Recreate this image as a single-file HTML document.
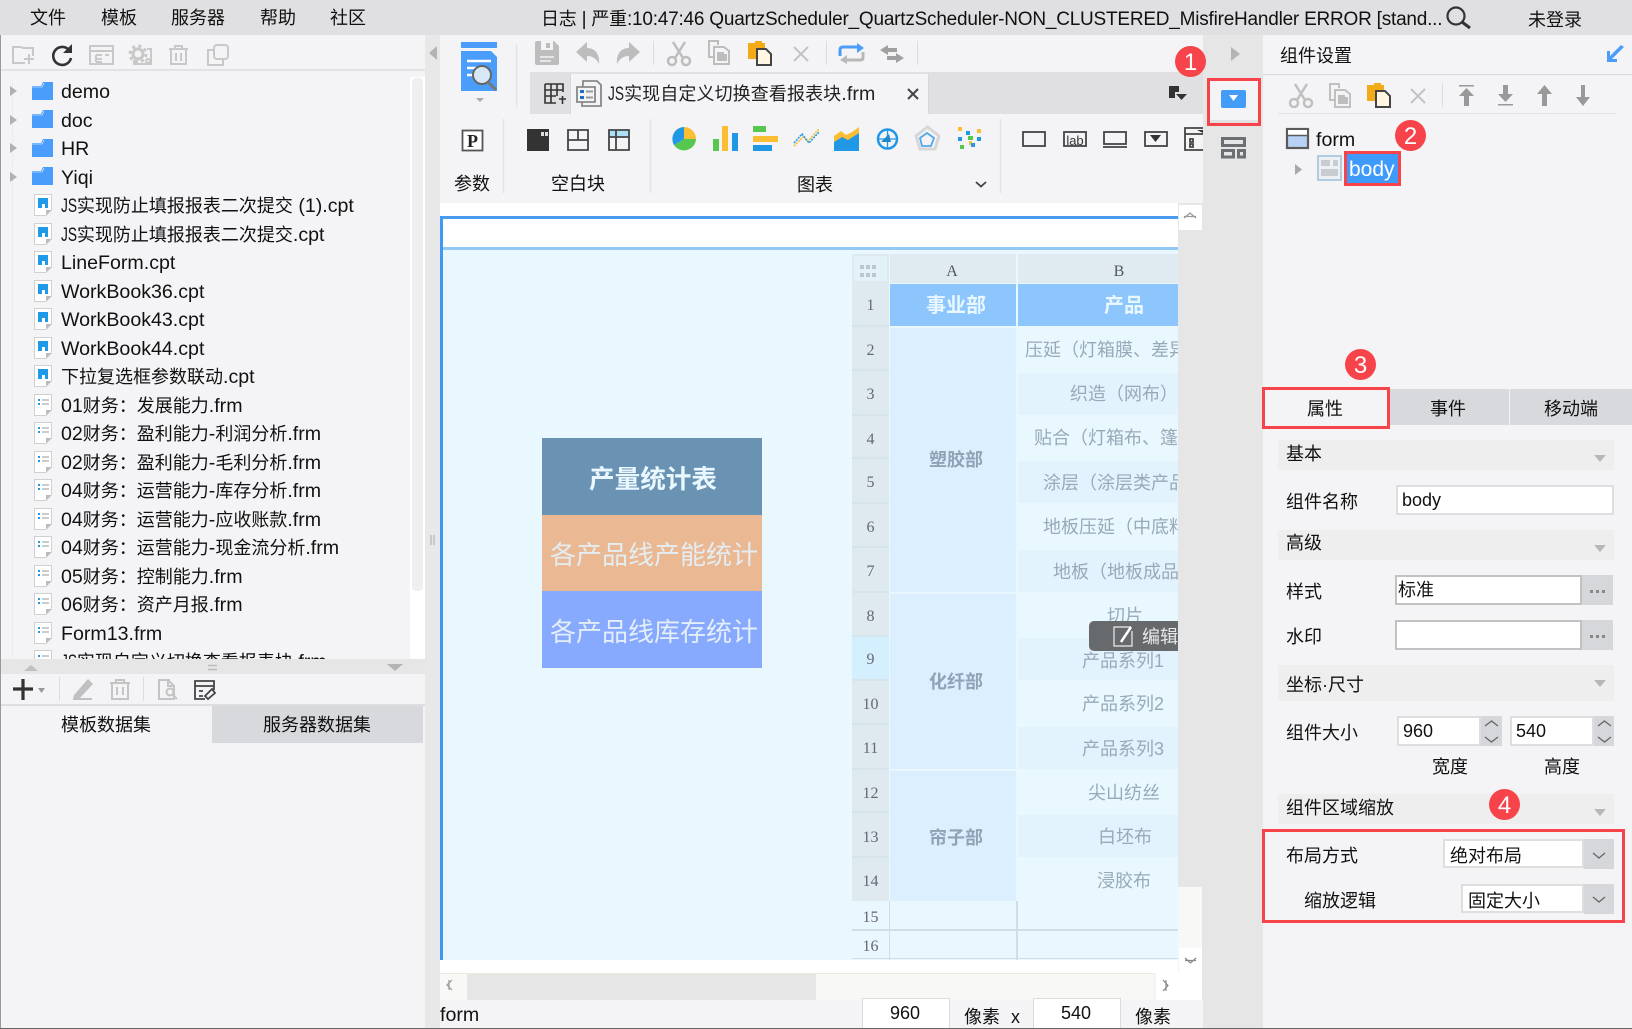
<!DOCTYPE html>
<html lang="zh"><head><meta charset="utf-8"><title>FineReport</title>
<style>
html,body{margin:0;padding:0;width:1632px;height:1029px;overflow:hidden;background:#f4f4f6}
body{position:relative;font-family:"Liberation Sans","Noto Sans CJK SC",sans-serif;color:#111;font-size:18px}
.b{position:absolute;box-sizing:border-box}
.t{position:absolute;white-space:nowrap;height:24px;line-height:24px;margin-top:1px}
.f{font-size:19.6px}
.f span{font-size:18px}
.f span.js,.js{display:inline-block;font-size:19.6px;transform:scaleX(.7);transform-origin:0 0;margin-right:-7px}
.g{color:#99a9b8;font-size:18px}
.gb{color:#8fa3b7;font-size:18px;font-weight:700;width:126px;left:893px;text-align:center}
.n{font-family:"Liberation Serif",serif;font-size:16px;color:#667;left:852px;width:37px;text-align:center}
.rh{position:absolute;left:852px;width:37px;background:#dfeaf0;border-bottom:2px solid #d6e4ec;box-sizing:border-box}
.alt{position:absolute;left:1018px;width:160px;background:#e3f3fd}
.sec{position:absolute;left:1278px;width:336px;background:#eeeeef}
.red{position:absolute;box-sizing:border-box;border:3px solid #f6444a}
.dot{position:absolute;width:31px;height:31px;border-radius:50%;background:#f6444a;color:#fff;font-size:24px;line-height:33px;text-align:center}
.inp{position:absolute;box-sizing:border-box;background:#fff;border:2px solid #dedede}
.inp2{position:absolute;box-sizing:border-box;background:#fff;border:2px solid #c2c2c2}
.btn{position:absolute;background:#d6d7db}
svg{position:absolute;left:0;top:0}
</style></head><body>

<!-- menu bar -->
<div class="b" style="left:0;top:0;width:1632px;height:35px;background:#e0e0e2"></div>
<div class="t" style="left:30px;top:5px">文件</div>
<div class="t" style="left:101px;top:5px">模板</div>
<div class="t" style="left:171px;top:5px">服务器</div>
<div class="t" style="left:260px;top:5px">帮助</div>
<div class="t" style="left:330px;top:5px">社区</div>
<div class="t" style="left:541px;top:6px;font-size:19px;letter-spacing:-.22px"><span style="font-size:18px">日志</span> | <span style="font-size:18px">严重</span>:10:47:46 QuartzScheduler_QuartzScheduler-NON_CLUSTERED_MisfireHandler ERROR [stand...</div>
<div class="t" style="left:1528px;top:7px">未登录</div>

<!-- left panel -->
<div class="b" style="left:0;top:35px;width:1px;height:994px;background:#999"></div>
<div class="b" style="left:1px;top:69px;width:424px;height:2px;background:#e2e2e4"></div>
<div class="b" style="left:410px;top:77px;width:15px;height:582px;background:#fff"></div>
<div class="b" style="left:412px;top:78px;width:11px;height:513px;background:#efeff1;border-radius:4px"></div>
<div class="b" style="left:425px;top:35px;width:15px;height:994px;background:#e8e8e8"></div>
<div class="b" style="left:12px;top:78px;width:1px;height:580px;background:#ececee"></div>

<div class="t f" style="left:61px;top:79px">demo</div>
<div class="t f" style="left:61px;top:108px">doc</div>
<div class="t f" style="left:61px;top:136px">HR</div>
<div class="t f" style="left:61px;top:165px">Yiqi</div>
<div class="t f" style="left:61px;top:193px"><span class="js">JS</span><span>实现防止填报报表二次提交</span> (1).cpt</div>
<div class="t f" style="left:61px;top:222px"><span class="js">JS</span><span>实现防止填报报表二次提交</span>.cpt</div>
<div class="t f" style="left:61px;top:250px">LineForm.cpt</div>
<div class="t f" style="left:61px;top:279px">WorkBook36.cpt</div>
<div class="t f" style="left:61px;top:307px">WorkBook43.cpt</div>
<div class="t f" style="left:61px;top:336px">WorkBook44.cpt</div>
<div class="t f" style="left:61px;top:364px"><span>下拉复选框参数联动</span>.cpt</div>
<div class="t f" style="left:61px;top:393px">01<span>财务：发展能力</span>.frm</div>
<div class="t f" style="left:61px;top:421px">02<span>财务：盈利能力</span>-<span>利润分析</span>.frm</div>
<div class="t f" style="left:61px;top:450px">02<span>财务：盈利能力</span>-<span>毛利分析</span>.frm</div>
<div class="t f" style="left:61px;top:478px">04<span>财务：运营能力</span>-<span>库存分析</span>.frm</div>
<div class="t f" style="left:61px;top:507px">04<span>财务：运营能力</span>-<span>应收账款</span>.frm</div>
<div class="t f" style="left:61px;top:535px">04<span>财务：运营能力</span>-<span>现金流分析</span>.frm</div>
<div class="t f" style="left:61px;top:564px">05<span>财务：控制能力</span>.frm</div>
<div class="t f" style="left:61px;top:592px">06<span>财务：资产月报</span>.frm</div>
<div class="t f" style="left:61px;top:621px">Form13.frm</div>
<div class="t f" style="left:61px;top:649px"><span class="js">JS</span><span>实现自定义切换查看报表块</span>.frm</div>

<svg width="1632" height="1029" viewBox="0 0 1632 1029">
<defs>
<symbol id="fd" overflow="visible"><path d="M0 4H9L11 0H21V18H0Z" fill="#4a9dfb"/><path d="M0 5H10L12 1" fill="none" stroke="#fff" stroke-width=".6"/></symbol>
<symbol id="cp" overflow="visible"><path d="M.5.5H17.5V16L12 21.5H.5Z" fill="#fff" stroke="#d0d0d0"/><path d="M12 21V16H17.5Z" fill="#bbb"/><path d="M4 4H14V14H11V10H8V14H4Z" fill="#1f9ae8"/></symbol>
<symbol id="fr" overflow="visible"><path d="M.5.5H17.5V16L12 21.5H.5Z" fill="#fff" stroke="#d0d0d0"/><path d="M12 21V16H17.5Z" fill="#bbb"/><path d="M4 5h2v2H4zM4 9h2v2H4z" fill="#1f9ae8"/><path d="M8 6h7M8 10h7" stroke="#999" fill="none"/></symbol>
<symbol id="ar" overflow="visible"><path d="M0 0L7 5L0 10Z" fill="#b0b0b0"/></symbol>
</defs>
<use href="#ar" x="10" y="86"/><use href="#ar" x="10" y="115"/><use href="#ar" x="10" y="143"/><use href="#ar" x="10" y="172"/>
<use href="#fd" x="32" y="82"/><use href="#fd" x="32" y="110"/><use href="#fd" x="32" y="139"/><use href="#fd" x="32" y="167"/>
<use href="#cp" x="34" y="194"/><use href="#cp" x="34" y="223"/><use href="#cp" x="34" y="251"/><use href="#cp" x="34" y="280"/><use href="#cp" x="34" y="308"/><use href="#cp" x="34" y="337"/><use href="#cp" x="34" y="365"/>
<use href="#fr" x="34" y="394"/><use href="#fr" x="34" y="422"/><use href="#fr" x="34" y="451"/><use href="#fr" x="34" y="479"/><use href="#fr" x="34" y="508"/><use href="#fr" x="34" y="536"/><use href="#fr" x="34" y="565"/><use href="#fr" x="34" y="593"/><use href="#fr" x="34" y="622"/><use href="#fr" x="34" y="650"/>
</svg>

<!-- left lower -->
<div class="b" style="left:1px;top:659px;width:424px;height:15px;background:#e6e6e6"></div>
<div class="b" style="left:1px;top:674px;width:424px;height:355px;background:#f4f4f6"></div>
<div class="b" style="left:1px;top:704px;width:424px;height:2px;background:#dedee0"></div>
<div class="b" style="left:212px;top:706px;width:211px;height:37px;background:#d8d9dd"></div>
<div class="t" style="left:61px;top:712px">模板数据集</div>
<div class="t" style="left:263px;top:712px">服务器数据集</div>

<!-- center toolbar -->
<div class="b" style="left:440px;top:35px;width:763px;height:168px;background:#f4f4f6"></div>
<div class="b" style="left:530px;top:72px;width:673px;height:42px;background:#e0e0e2"></div>
<div class="b" style="left:570px;top:74px;width:359px;height:40px;background:#f4f4f6;border-left:1px solid #d8d8da;border-right:1px solid #d8d8da"></div>
<div class="t f" style="left:608px;top:81px;color:#222;letter-spacing:.1px"><span class="js">JS</span><span>实现自定义切换查看报表块</span>.frm</div>
<div class="t" style="left:454px;top:171px">参数</div>
<div class="t" style="left:551px;top:171px">空白块</div>
<div class="t" style="left:797px;top:172px">图表</div>

<!-- canvas -->
<div class="b" style="left:440px;top:203px;width:738px;height:770px;background:#fff"></div>
<div class="b" style="left:440px;top:216px;width:738px;height:3px;background:#4a9cf0"></div>
<div class="b" style="left:440px;top:216px;width:3px;height:744px;background:#4097f5"></div>
<div class="b" style="left:443px;top:247px;width:735px;height:3px;background:#93c8f6"></div>
<div class="b" style="left:443px;top:250px;width:735px;height:710px;background:#e9f7ff"></div>

<!-- left blocks -->
<div class="b" style="left:542px;top:438px;width:220px;height:77px;background:#6a92b3"></div>
<div class="b" style="left:542px;top:515px;width:220px;height:76px;background:#eab893"></div>
<div class="b" style="left:542px;top:591px;width:220px;height:77px;background:#87aaff"></div>
<div class="t" style="left:589px;top:467px;font-size:25.6px;font-weight:700;color:#e9f7ff">产量统计表</div>
<div class="t" style="left:550px;top:542px;font-size:26px;color:#e4eef2">各产品线产能统计</div>
<div class="t" style="left:550px;top:619px;font-size:26px;color:#e4eef8">各产品线库存统计</div>

<!-- table -->
<div style="position:absolute;left:0;top:0;width:1178px;height:960px;overflow:hidden">
<div class="b" style="left:852px;top:254px;width:37px;height:29px;background:#e3f1f8;border:2px solid #dfeaf0"></div>
<div class="b" style="left:890px;top:254px;width:126px;height:29px;background:#dfebf1"></div>
<div class="b" style="left:1018px;top:254px;width:160px;height:29px;background:#dfebf1"></div>
<div class="b" style="left:890px;top:284px;width:126px;height:42px;background:#8dc5fd"></div>
<div class="b" style="left:1018px;top:284px;width:160px;height:42px;background:#8dc5fd"></div>
<div class="b" style="left:890px;top:328px;width:126px;height:264px;background:#dcefff"></div>
<div class="b" style="left:890px;top:594px;width:126px;height:175px;background:#dcefff"></div>
<div class="b" style="left:890px;top:771px;width:126px;height:130px;background:#dcefff"></div>
<div class="rh" style="top:283px;height:44px"></div><div class="rh" style="top:327px;height:44px"></div><div class="rh" style="top:371px;height:45px"></div><div class="rh" style="top:416px;height:43px"></div><div class="rh" style="top:459px;height:45px"></div><div class="rh" style="top:504px;height:44px"></div><div class="rh" style="top:548px;height:45px"></div><div class="rh" style="top:593px;height:44px"></div><div class="rh" style="top:637px;height:44px;background:#d4f0ff"></div><div class="rh" style="top:681px;height:44px"></div><div class="rh" style="top:725px;height:45px"></div><div class="rh" style="top:770px;height:43px"></div><div class="rh" style="top:813px;height:45px"></div><div class="rh" style="top:858px;height:43px;border:0"></div>
<div class="alt" style="top:373px;height:42px"></div><div class="alt" style="top:461px;height:42px"></div><div class="alt" style="top:550px;height:42px"></div><div class="alt" style="top:638px;height:42px"></div><div class="alt" style="top:727px;height:42px"></div><div class="alt" style="top:815px;height:42px"></div>
<div class="b" style="left:889px;top:901px;width:1px;height:59px;background:#cfdde5"></div>
<div class="b" style="left:1016px;top:901px;width:2px;height:59px;background:#cfdde5"></div>
<div class="b" style="left:852px;top:929px;width:326px;height:2px;background:#cfdde5"></div>
<div class="b" style="left:852px;top:958px;width:326px;height:1px;background:#cfdde5"></div>

<div class="t" style="left:889px;top:259px;width:126px;text-align:center;font-family:'Liberation Serif',serif;font-size:16px;color:#556">A</div>
<div class="t" style="left:1018px;top:259px;width:202px;text-align:center;font-family:'Liberation Serif',serif;font-size:16px;color:#556">B</div>
<div class="t" style="left:926px;top:293px;font-size:20px;font-weight:700;color:#e9f7ff">事业部</div>
<div class="t" style="left:1104px;top:293px;font-size:20px;font-weight:700;color:#e9f7ff">产品</div>
<div class="t gb" style="top:447px">塑胶部</div>
<div class="t gb" style="top:669px">化纤部</div>
<div class="t gb" style="top:825px">帘子部</div>
<div class="t g" style="left:1025px;top:337px">压延（灯箱膜、差异</div>
<div class="t g" style="left:1070px;top:381px">织造（网布）</div>
<div class="t g" style="left:1034px;top:425px">贴合（灯箱布、篷</div>
<div class="t g" style="left:1043px;top:470px">涂层（涂层类产品</div>
<div class="t g" style="left:1043px;top:514px">地板压延（中底料</div>
<div class="t g" style="left:1053px;top:559px">地板（地板成品</div>
<div class="t g" style="left:1107px;top:603px">切片</div>
<div class="t g" style="left:1082px;top:648px">产品系列1</div>
<div class="t g" style="left:1082px;top:691px">产品系列2</div>
<div class="t g" style="left:1082px;top:736px">产品系列3</div>
<div class="t g" style="left:1088px;top:780px">尖山纺丝</div>
<div class="t g" style="left:1098px;top:824px">白坯布</div>
<div class="t g" style="left:1097px;top:868px">浸胶布</div>
<div class="t n" style="top:293px">1</div><div class="t n" style="top:338px">2</div><div class="t n" style="top:382px">3</div><div class="t n" style="top:427px">4</div><div class="t n" style="top:470px">5</div><div class="t n" style="top:515px">6</div><div class="t n" style="top:559px">7</div><div class="t n" style="top:604px">8</div><div class="t n" style="top:647px">9</div><div class="t n" style="top:692px">10</div><div class="t n" style="top:736px">11</div><div class="t n" style="top:781px">12</div><div class="t n" style="top:825px">13</div><div class="t n" style="top:869px">14</div><div class="t n" style="top:905px">15</div><div class="t n" style="top:934px">16</div>
<div class="b" style="left:1089px;top:621px;width:92px;height:30px;background:#666a6d;border-radius:5px 0 0 5px"></div>
<div class="t" style="left:1142px;top:624px;font-size:18px;color:#e8e8e8">编辑</div>
</div>

<!-- canvas scrollbars -->
<div class="b" style="left:1178px;top:203px;width:25px;height:684px;background:#e6e6e6"></div>
<div class="b" style="left:1179px;top:205px;width:23px;height:25px;background:#fff"></div>
<div class="b" style="left:1178px;top:887px;width:24px;height:61px;background:#f8f8f6"></div>
<div class="b" style="left:1179px;top:948px;width:23px;height:25px;background:#fff"></div>
<div class="b" style="left:1202px;top:887px;width:1px;height:113px;background:#e6e6e6"></div>
<div class="b" style="left:440px;top:973px;width:713px;height:27px;background:#f8f8f6;border-top:1px solid #ece8dc"></div>
<div class="b" style="left:467px;top:974px;width:349px;height:26px;background:#e6e6e6"></div>
<div class="b" style="left:440px;top:974px;width:22px;height:26px;background:#f8f8f6"></div>
<div class="b" style="left:1156px;top:973px;width:46px;height:27px;background:#fff"></div>

<!-- status bar -->
<div class="b" style="left:440px;top:1000px;width:763px;height:29px;background:#f4f4f6"></div>
<div class="b" style="left:862px;top:998px;width:88px;height:31px;background:#fff;border:1px solid #dcdcdc"></div>
<div class="b" style="left:1033px;top:998px;width:88px;height:31px;background:#fff;border:1px solid #dcdcdc"></div>
<div class="t f" style="left:440px;top:1002px">form</div>
<div class="t" style="left:861px;width:88px;text-align:center;top:1000px;font-size:18px">960</div>
<div class="t" style="left:1032px;width:88px;text-align:center;top:1000px;font-size:18px">540</div>
<div class="t" style="left:964px;top:1004px">像素</div>
<div class="t" style="left:1011px;top:1004px">x</div>
<div class="t" style="left:1135px;top:1004px">像素</div>

<!-- right strip -->
<div class="b" style="left:1203px;top:35px;width:60px;height:994px;background:#e6e6e6"></div>
<div class="b" style="left:1210px;top:81px;width:48px;height:39px;background:#f4f4f6"></div>
<div class="b" style="left:1210px;top:120px;width:48px;height:3px;background:#e2e2e2"></div>
<div class="b" style="left:1221px;top:90px;width:25px;height:18px;background:#439cf8;border-radius:2px"></div>
<div class="red" style="left:1207px;top:78px;width:54px;height:48px"></div>

<!-- right panel -->
<div class="b" style="left:1263px;top:35px;width:369px;height:994px;background:#f4f4f6"></div>
<div class="t" style="left:1280px;top:43px">组件设置</div>
<div class="b" style="left:1263px;top:74px;width:369px;height:1px;background:#dadadc"></div>
<div class="b" style="left:1278px;top:113px;width:339px;height:1px;background:#e4e4e6"></div>
<div class="t f" style="left:1316px;top:127px">form</div>
<div class="b" style="left:1344px;top:151px;width:57px;height:35px;background:#3f9bfb"></div>
<div class="t" style="left:1349px;top:157px;color:#fff;font-size:21px">body</div>
<div class="red" style="left:1344px;top:151px;width:57px;height:35px"></div>

<!-- tabs -->
<div class="b" style="left:1390px;top:389px;width:119px;height:36px;background:#d8d9dd"></div>
<div class="b" style="left:1510px;top:389px;width:122px;height:36px;background:#d8d9dd"></div>
<div class="t" style="left:1307px;top:396px">属性</div>
<div class="t" style="left:1430px;top:396px">事件</div>
<div class="t" style="left:1544px;top:396px">移动端</div>
<div class="red" style="left:1262px;top:387px;width:128px;height:42px"></div>

<!-- props -->
<div class="sec" style="top:440px;height:30px"></div>
<div class="t" style="left:1286px;top:441px">基本</div>
<div class="t" style="left:1286px;top:489px">组件名称</div>
<div class="inp" style="left:1396px;top:485px;width:218px;height:30px"></div>
<div class="t" style="left:1402px;top:487px;font-size:18px">body</div>
<div class="sec" style="top:530px;height:30px"></div>
<div class="t" style="left:1286px;top:530px">高级</div>
<div class="t" style="left:1286px;top:579px">样式</div>
<div class="inp2" style="left:1395px;top:575px;width:187px;height:30px"></div>
<div class="t" style="left:1398px;top:577px">标准</div>
<div class="btn" style="left:1582px;top:575px;width:31px;height:30px"></div>
<div class="t" style="left:1286px;top:624px">水印</div>
<div class="inp2" style="left:1395px;top:620px;width:187px;height:30px"></div>
<div class="btn" style="left:1582px;top:620px;width:31px;height:30px"></div>
<div class="sec" style="top:665px;height:36px"></div>
<div class="t" style="left:1286px;top:672px">坐标·尺寸</div>
<div class="t" style="left:1286px;top:720px">组件大小</div>
<div class="inp" style="left:1397px;top:716px;width:84px;height:30px"></div>
<div class="t" style="left:1403px;top:718px">960</div>
<div class="btn" style="left:1481px;top:716px;width:21px;height:30px"></div>
<div class="inp" style="left:1510px;top:716px;width:84px;height:30px"></div>
<div class="t" style="left:1516px;top:718px">540</div>
<div class="btn" style="left:1594px;top:716px;width:20px;height:30px"></div>
<div class="t" style="left:1432px;top:754px">宽度</div>
<div class="t" style="left:1544px;top:754px">高度</div>
<div class="sec" style="top:794px;height:30px"></div>
<div class="t" style="left:1286px;top:795px">组件区域缩放</div>
<div class="t" style="left:1286px;top:843px">布局方式</div>
<div class="inp" style="left:1443px;top:839px;width:141px;height:29px"></div>
<div class="t" style="left:1450px;top:843px">绝对布局</div>
<div class="btn" style="left:1584px;top:839px;width:30px;height:30px"></div>
<div class="t" style="left:1304px;top:888px">缩放逻辑</div>
<div class="inp" style="left:1461px;top:884px;width:123px;height:29px"></div>
<div class="t" style="left:1468px;top:888px">固定大小</div>
<div class="btn" style="left:1584px;top:884px;width:30px;height:30px"></div>
<div class="red" style="left:1262px;top:829px;width:363px;height:94px"></div>
<div class="b" style="left:0;top:1028px;width:1632px;height:1px;background:#666"></div>

<!-- badges -->
<div class="dot" style="left:1175px;top:46px">1</div>
<div class="dot" style="left:1395px;top:120px">2</div>
<div class="dot" style="left:1345px;top:349px">3</div>
<div class="dot" style="left:1489px;top:789px">4</div>

<!-- icons overlay -->
<svg width="1632" height="1029" viewBox="0 0 1632 1029" fill="none">
<defs>
<g id="cut"><circle cx="5" cy="19" r="4" stroke-width="2.5"/><circle cx="19" cy="19" r="4" stroke-width="2.5"/><path d="M8 16L18 0M16 16L6 0" stroke-width="2.5"/></g>
<g id="cop"><path d="M10 4V0H1V16H6M6 6H16L21 10V23H6Z" stroke-width="2"/><path d="M11 11H16V13H19V20H9V11Z" fill="#bdbdbd" stroke="none"/></g>
<g id="pas"><path d="M0 2H7V0H14V2H17V8H8V18H0Z" fill="#f2ab16"/><path d="M9 8H18L23 13V24H9Z" fill="#fff7e2" stroke="#444" stroke-width="2"/></g>
</defs>
<!-- top search -->
<circle cx="1456" cy="16" r="8.5" stroke="#333" stroke-width="2.2"/><path d="M1462 22L1470 28" stroke="#333" stroke-width="3"/>
<!-- center drag triangles -->
<path d="M437 46V60L429 53Z" fill="#b4b4b4"/><path d="M1231 47V61L1240 54Z" fill="#b4b4b4"/>
<path d="M431 535V545M434 535V545" stroke="#aaa"/>
<!-- left toolbar -->
<g stroke="#c8c8c8" stroke-width="2"><path d="M33 56V48H23L21 47H13V63H25M29 54V64M24 59H34"/><rect x="90" y="46" width="23" height="18"/><path d="M90 51H113M96 55H102M96 55V62M96 59H102M96 62H102M105 55H109"/><path d="M147 49H151V64H134V60"/><circle cx="138" cy="54" r="5" stroke-width="3"/><circle cx="138" cy="54" r="8" stroke-width="3" stroke-dasharray="3 3.3"/><circle cx="148" cy="61" r="2"/><path d="M169 49H188M175 49V46H182V49M171 49V64H186V49M176 53V61M181 53V61"/><rect x="214" y="45" width="14" height="14" rx="3"/><path d="M214 50H208V65H223V59"/></g>
<path d="M69 50A9 9 0 1 0 71 58" stroke="#333" stroke-width="2.6"/><path d="M72 44V53H63Z" fill="#333"/>
<!-- lower toolbar -->
<path d="M13 689H33M23 679V700" stroke="#333" stroke-width="3.2"/><path d="M38 688H45L41.500 693Z" fill="#999"/>
<path d="M59.500 677V701M143.500 677V701" stroke="#ddd"/>
<g fill="#c0c0c0"><path d="M74 695L88 679L93 684L79 699L73 700Z"/><path d="M73 698H92V700H73Z"/></g>
<g stroke="#c4c4c4" stroke-width="2"><path d="M110 683H130M116 683V680H124V683M112 683V699H128V683M117 687V695M123 687V695"/><path d="M170 680H159V699H174V686L168 680M168 680V686H174"/><circle cx="170" cy="692" r="3.500"/><path d="M173 695L177 699"/></g>
<g stroke="#444" stroke-width="1.800"><path d="M205 699H195V681H214V690M195 686H214M199 691H203M199 696H203"/><path d="M205 696L212 689L215 693L208 699Z"/></g>
<path d="M24 671L31 665L38 671Z" fill="#c0c0c0"/><path d="M208 665.500H217M208 669.500H217" stroke="#bbb" stroke-width="1.500"/><path d="M387 664H403L395 671Z" fill="#b4b4b4"/>
<!-- logo -->
<rect x="461" y="42" width="36" height="6" fill="#4a9dfb"/>
<path d="M461 51H491L497 57V91H461Z" fill="#4a9dfb"/>
<path d="M467 61H491M467 68H480M467 75H474" stroke="#fff" stroke-width="2.500"/>
<circle cx="482" cy="75" r="9" fill="#d8e8f6" stroke="#666" stroke-width="2"/><path d="M488 82L496 90" stroke="#777" stroke-width="3"/>
<path d="M476 98H484L480 102Z" fill="#aaa"/>
<path d="M516.500 44V107M503.500 119V193M650.500 119V193M1000.500 119V193" stroke="#e4e4e0" stroke-width="1.500"/>
<!-- top tools -->
<path d="M535 43Q535 41 537 41H554L559 46V63Q559 65 557 65H537Q535 65 535 63Z" fill="#bdbdbd"/><path d="M541 41H553V50H541Z" fill="#f4f4f6"/><rect x="546" y="43" width="4" height="5" fill="#bdbdbd"/><path d="M540 57H554M540 61H551" stroke="#f4f4f6" stroke-width="1.500"/>
<path d="M576 52L587 42V48C595 48 600 54 599 64C596 58 592 56 587 56V62Z" fill="#bdbdbd"/>
<path d="M640 52L629 42V48C621 48 616 54 617 64C620 58 624 56 629 56V62Z" fill="#bdbdbd"/>
<path d="M653.500 41V65M826.500 41V65M917.500 41V65M1442.500 83V107" stroke="#dcdcdc"/>
<use href="#cut" x="667" y="42" stroke="#bdbdbd"/>
<use href="#cop" x="708" y="41" stroke="#bdbdbd"/>
<use href="#pas" x="748" y="41"/>
<path d="M794 47L808 61M808 47L794 61" stroke="#c4c4c4" stroke-width="2"/>
<path d="M840 56V50Q840 47 843 47H858" stroke="#4a9dfb" stroke-width="3"/><path d="M857 43L864 48L857 53Z" fill="#4a9dfb"/><path d="M863 52V58Q863 60 860 60H846" stroke="#b8b8b8" stroke-width="3"/><path d="M847 55L840 60L847 64Z" fill="#b8b8b8"/>
<path d="M880 50L888 45V48H897V52H888V55ZM904 58L896 53V56H887V60H896V63Z" fill="#a0a0a0"/>
<!-- tab icons -->
<path d="M545 84H563V92M545 84V103H556M545 90H563M545 96H556M551 84V103M557 84V96M559 99H566M562.500 96V104" stroke="#333" stroke-width="1.600"/>
<path d="M583 81H597L601 85V106H582Z" fill="#f4f4f6" stroke="#888" stroke-width="1.800"/><path d="M577 87H595V102H577Z" fill="#f4f4f6" stroke="#888" stroke-width="1.800"/><rect x="580" y="90" width="4" height="3" fill="#1b6fc4"/><rect x="580" y="96" width="4" height="3" fill="#1b6fc4"/><path d="M586 91.500H593M586 97.500H593" stroke="#999" stroke-width="2"/>
<path d="M908 89L918 99M918 89L908 99" stroke="#444" stroke-width="2"/>
<path d="M1169 86H1179V92H1175V98H1169Z" fill="#333"/><path d="M1176 94H1187L1181.500 100Z" fill="#333"/>
<!-- param/block icons -->
<rect x="462.500" y="130.500" width="20" height="20" stroke="#555" stroke-width="1.800" fill="#fff"/>
<text x="472.500" y="147" font-family="Liberation Serif,serif" font-weight="700" font-size="18" fill="#222" text-anchor="middle">P</text>
<rect x="527" y="129" width="22" height="22" fill="#333"/><rect x="541" y="132" width="3" height="4" fill="#ddd"/><rect x="545" y="132" width="3" height="4" fill="#ddd"/>
<path d="M568 130H588V150H568ZM568 140H588M578 130V140" stroke="#444" stroke-width="1.800"/>
<rect x="609" y="130" width="20" height="7" fill="#aee0f5"/><path d="M609 130H629V150H609ZM609 137H629M616 130V150" stroke="#444" stroke-width="1.800"/>
<!-- charts -->
<path d="M684 139V127A12 12 0 0 1 696 139Z" fill="#fbbd32"/><path d="M684 139H696A12 12 0 0 1 674 145Z" fill="#57c74f"/><path d="M684 139L674 145A12 12 0 0 1 684 127Z" fill="#2198e6"/>
<rect x="713" y="139" width="6" height="12" fill="#57c74f"/><rect x="722" y="126" width="6" height="25" fill="#fbbd32"/><rect x="732" y="133" width="6" height="18" fill="#2198e6"/>
<rect x="753" y="126" width="13" height="6" fill="#57c74f"/><rect x="753" y="136" width="25" height="6" fill="#fbbd32"/><rect x="753" y="145" width="19" height="6" fill="#2198e6"/>
<path d="M794 146L803 137L808 141L819 129" stroke="#fbbd32" stroke-width="1.600" stroke-dasharray="2 1"/><path d="M794 143L802 134L809 143L819 132" stroke="#2198e6" stroke-width="1.600" stroke-dasharray="2 1"/>
<path d="M834 136L841 131L846 135L852 132L859 127V140L834 145Z" fill="#fbbd32"/><path d="M834 142L842 137L848 140L859 133V151H834Z" fill="#2198e6"/>
<circle cx="887.500" cy="139" r="9.500" stroke="#2198e6" stroke-width="2.500"/><path d="M878 139H897M887.500 129V149" stroke="#2198e6" stroke-width="1.300"/><path d="M881 142L889 134L891 142Z" fill="#2188c8"/>
<path d="M927.500 127L939 136L935 149H920L916 136Z" stroke="#d7d7d7" stroke-width="3"/><path d="M927 133L934 138L931 146H922L920 138Z" stroke="#52a8e8" stroke-width="1.800"/>
<g fill="#fbbd32"><rect x="958" y="127" width="4" height="4"/><rect x="977" y="129" width="4" height="4"/><rect x="969" y="141" width="3" height="4"/></g><g fill="#2198e6"><rect x="966" y="131" width="4" height="4"/><rect x="958" y="137" width="4" height="4"/><rect x="977" y="137" width="4" height="4"/><rect x="971" y="143" width="4" height="4"/></g><g fill="#57c74f"><rect x="968" y="136" width="5" height="4"/><rect x="960" y="145" width="4" height="4"/></g>
<path d="M976 182L981 186.500L986 182" stroke="#444" stroke-width="1.800"/>
<g stroke="#444" stroke-width="1.800"><rect x="1023" y="132" width="22" height="14"/><rect x="1064" y="132" width="22" height="14"/><rect x="1104" y="132" width="22" height="12"/><path d="M1103 147H1127"/><rect x="1145" y="132" width="22" height="14"/><path d="M1203 128H1185V150H1203M1185 134H1203M1190 139H1193V142H1190ZM1190 144H1193V147H1190Z"/></g>
<text x="1075" y="145" font-size="13" fill="#333" text-anchor="middle" font-family="Liberation Sans,sans-serif">lab</text>
<path d="M1150 135H1161L1155.500 142Z" fill="#333"/><path d="M1197 130H1203V133Z" fill="#333"/>
<!-- right strip icons -->
<path d="M1229 95H1238L1233.500 101Z" fill="#fff"/>
<g stroke="#6b6e73" stroke-width="3"><rect x="1222.500" y="138.500" width="22" height="7"/><rect x="1222.500" y="150.500" width="11" height="6.500"/><rect x="1238.500" y="150.500" width="6" height="6.500"/></g>
<!-- grid dots -->
<g fill="#b9c7d0"><rect x="860" y="265" width="4" height="4"/><rect x="866" y="265" width="4" height="4"/><rect x="872" y="265" width="4" height="4"/><rect x="860" y="273" width="4" height="4"/><rect x="866" y="273" width="4" height="4"/><rect x="872" y="273" width="4" height="4"/></g>
<!-- edit icon -->
<path d="M1131 627H1114V646H1132V631" stroke="#eee" stroke-width="1.200"/><path d="M1121 642L1131 627" stroke="#fff" stroke-width="2.500"/>
<!-- scroll arrows -->
<path d="M1184 218L1190 213L1196 218M1184 216.500H1196" stroke="#999" stroke-width="1.200"/>
<path d="M1185 958L1190.500 963L1196 958M1185 960.500H1196" stroke="#888" stroke-width="1.200"/>
<path d="M452 980L447 985L452 990M449 980V990" stroke="#999" stroke-width="1.200"/>
<path d="M1163 980L1168 985.500L1163 991M1166 980V991" stroke="#888" stroke-width="1.200"/>
<!-- right panel icons -->
<path d="M1607 62H1617V59H1612L1624 47L1621 45L1610 56V51H1607Z" fill="#4a9dfb"/>
<use href="#cut" x="1289" y="84" stroke="#c0c0c0"/>
<use href="#cop" x="1329" y="84" stroke="#c0c0c0"/>
<use href="#pas" x="1367" y="83"/>
<path d="M1411 89L1425 103M1425 89L1411 103" stroke="#c4c4c4" stroke-width="2"/>
<g fill="#999"><path d="M1459 85H1474V86.500H1459ZM1466.500 88L1474 96H1469V106H1464V96H1459Z"/><path d="M1498 104H1513V105.500H1498ZM1505.500 102L1513 94H1508V85H1503V94H1498Z"/><path d="M1544.500 85L1552 94H1547V106H1542V94H1537Z"/><path d="M1583 106L1590 97H1585V85H1581V97H1576Z"/></g>
<!-- form tree -->
<rect x="1287" y="129" width="21" height="19" fill="#b6d1f3" stroke="#5a5a5a" stroke-width="2.200"/><rect x="1288" y="130" width="19" height="5" fill="#fff"/><path d="M1287 135.500H1308" stroke="#5a5a5a" stroke-width="1.500"/>
<path d="M1295 164L1302 169.500L1295 175Z" fill="#a8a8a8"/>
<rect x="1318" y="156" width="23" height="24" fill="#eef0f2" stroke="#a8c8de" stroke-width="1.800"/><rect x="1321" y="160" width="9" height="6" fill="#c8ccd0"/><rect x="1333" y="160" width="5" height="6" fill="#c8ccd0"/><rect x="1321" y="169" width="17" height="7" fill="#c8ccd0"/>
<!-- section triangles -->
<g fill="#b8b8b8"><path d="M1594 455H1606L1600 462Z"/><path d="M1594 545H1606L1600 552Z"/><path d="M1594 680H1606L1600 687Z"/><path d="M1594 809H1606L1600 816Z"/></g>
<g fill="#888"><rect x="1590" y="590" width="3" height="3"/><rect x="1596" y="590" width="3" height="3"/><rect x="1602" y="590" width="3" height="3"/><rect x="1590" y="635" width="3" height="3"/><rect x="1596" y="635" width="3" height="3"/><rect x="1602" y="635" width="3" height="3"/></g>
<g stroke="#666" stroke-width="1.300"><path d="M1485 726L1491.500 721L1498 726M1485 737L1491.500 742L1498 737M1598 726L1604.500 721L1611 726M1598 737L1604.500 742L1611 737"/><path d="M1593 853L1599 858L1605 853M1593 897L1599 902L1605 897"/></g>
</svg>
</body></html>
